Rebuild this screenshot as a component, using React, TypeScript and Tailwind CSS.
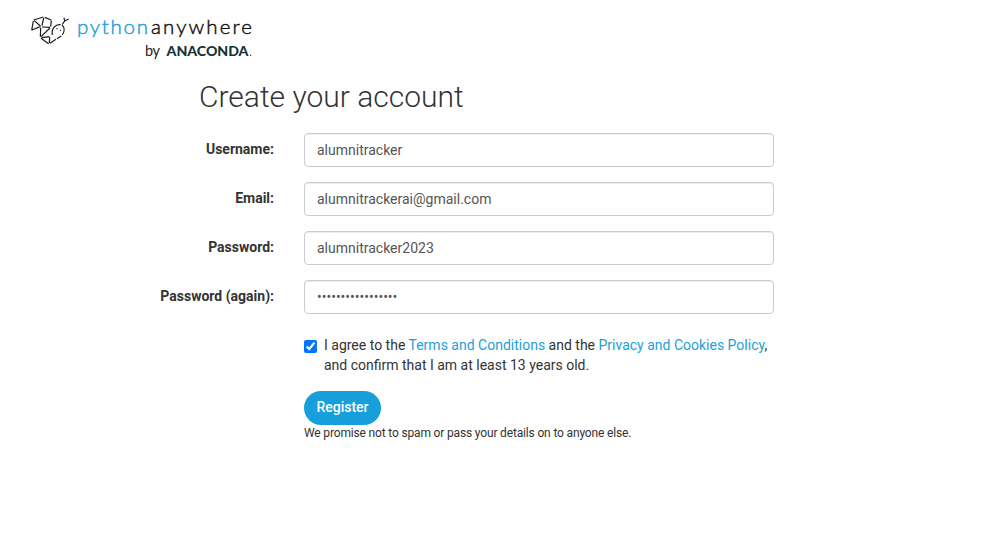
import React, { useState } from "react";

function Logo() {
  return (
    <svg
      className="block h-[60px] w-[256px]"
      viewBox="0 0 256 60"
      role="img"
      aria-label="PythonAnywhere by Anaconda"
      fontFamily="Lato, 'Open Sans', sans-serif"
    >
      <g transform="translate(20 5) scale(.33333)" fill="none" stroke="#1c1c1c" strokeWidth="3.6" strokeLinecap="butt" strokeLinejoin="round">
        <path d="M41 45 70 36M74 37 94 45M40 48 35 76M36 75 62 64M43 47 61 63M71 39 66 62M94 47 92 65M66 66 90 67M62 68 61 95M90 69 63 95M65 98 88 95M63 100 86 116M89 97 88 114" />
        <path d="M97 90C94 71 106 57 122 59M126 60C135 69 133 81 127 90M124 93 111 101M108 103 90 115" />
        <path d="M127 58 134 48 132 38M134 48 146 42" />
        <path strokeWidth="4.2" strokeLinecap="round" d="M111 71h.1M121 76h.1" />
      </g>
      <text x="77" y="33.6" fontSize="20.5" fontWeight="300" stroke="#1c9fdb" strokeWidth=".45" fill="#1c9fdb" textLength="71" lengthAdjust="spacing">python</text>
      <text x="151" y="33.6" fontSize="20.5" fontWeight="300" stroke="#111" strokeWidth=".45" fill="#111" textLength="101" lengthAdjust="spacing">anywhere</text>
      <text x="145" y="56" fontSize="14.5" fill="#222" textLength="15" lengthAdjust="spacing">by</text>
      <text x="166.5" y="56" fontSize="13.3" fontWeight="900" fill="#18323b" textLength="82" lengthAdjust="spacingAndGlyphs">ANACONDA</text>
      <circle cx="250.6" cy="55.3" r=".7" fill="#18323b" />
    </svg>
  );
}

const fields = [
  { id: "username", label: "Username:", type: "text", value: "alumnitracker" },
  { id: "email", label: "Email:", type: "text", value: "alumnitrackerai@gmail.com" },
  { id: "password", label: "Password:", type: "text", value: "alumnitracker2023" },
  { id: "password2", label: "Password (again):", type: "password", value: "alumnitracker2023" },
];

export default function App() {
  const [agreed, setAgreed] = useState(true);
  return (
    <div className="min-h-screen bg-white font-[Roboto,sans-serif] text-[14px] leading-5 text-[#333]">
      <header className="h-[78px]">
        <Logo />
      </header>
      <main className="ml-[109px] w-[665px]">
        <h1 className="ml-[90px] mb-[20px] h-[35px] text-[30px] leading-[38px] font-light whitespace-nowrap">Create your account</h1>
        <form onSubmit={(e) => e.preventDefault()}>
          {fields.map((f) => (
            <div key={f.id} className="mb-[15px] flex h-[34px] gap-[30px]">
              <label htmlFor={f.id} className="w-[165px] pt-[6px] text-right font-bold">{f.label}</label>
              <input
                id={f.id}
                type={f.type}
                defaultValue={f.value}
                className="h-[34px] w-[470px] rounded-[4px] border border-[#ccc] bg-white px-3 py-[6px] text-[14px] text-[#555] shadow-[inset_0_1px_1px_rgba(0,0,0,0.075)] outline-none"
              />
            </div>
          ))}
          <div className="ml-[195px] pt-[6px]">
            <label className="flex gap-[7px]">
              <input
                type="checkbox"
                checked={agreed}
                onChange={(e) => setAgreed(e.target.checked)}
                className="mt-[5px] h-[13px] w-[13px] shrink-0"
              />
              <span className="whitespace-nowrap">
                I agree to the <a className="text-[#1d9fd9]">Terms and Conditions</a> and the{" "}
                <a className="text-[#1d9fd9]">Privacy and Cookies Policy</a>,
                <br />
                and confirm that I am at least 13 years old.
              </span>
            </label>
            <button className="mt-4 block h-[34px] w-[77px] rounded-full bg-[#169fda] pb-[3px] text-[14px] font-medium text-white">Register</button>
            <p className="text-[12px] leading-[17px] tracking-[-0.16px] whitespace-nowrap">We promise not to spam or pass your details on to anyone else.</p>
          </div>
        </form>
      </main>
    </div>
  );
}
